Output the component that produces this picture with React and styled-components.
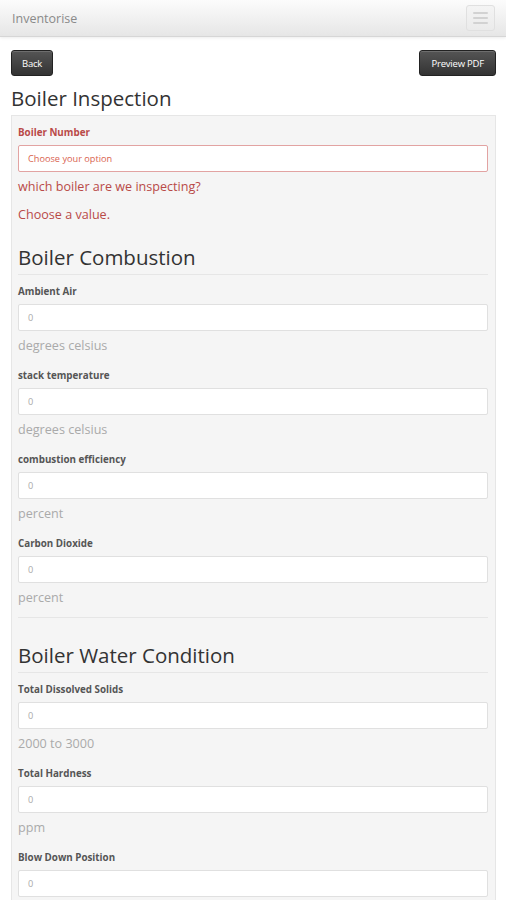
import React from "react";
import styled, { createGlobalStyle } from "styled-components";

const Global = createGlobalStyle`
  html, body { margin: 0; padding: 0; background: #fff; }
  body { font-family: "Open Sans", "Liberation Sans", sans-serif; color: #333; }
  * { box-sizing: border-box; }
`;

const Navbar = styled.div`
  height: 37px;
  display: flex;
  align-items: center;
  justify-content: space-between;
  padding: 0 11px 0 12px;
  background: linear-gradient(#fcfcfc, #e6e6e6);
  border-bottom: 1px solid #d6d6d6;
  box-shadow: 0 1px 3px rgba(0,0,0,0.08);
`;

const Brand = styled.div`
  font-size: 12.5px;
  color: #8a8a8a;
`;

const MenuButton = styled.div`
  width: 29px;
  height: 26px;
  border: 1px solid #e0e0e0;
  border-radius: 3px;
  background: linear-gradient(#f4f4f4, #ebebeb);
  display: flex;
  flex-direction: column;
  align-items: center;
  justify-content: center;
  gap: 3px;
`;

const Bar = styled.span`
  display: block;
  width: 15px;
  height: 2px;
  border-radius: 1px;
  background: #d2d2d2;
`;

const Page = styled.div`
  padding: 13px 10px 0 11px;
`;

const ButtonRow = styled.div`
  display: flex;
  justify-content: space-between;
`;

const DarkButton = styled.div`
  height: 26px;
  padding: 0 ${p => p.$pad || 11}px;
  display: flex;
  align-items: center;
  font-size: 9.5px;
  letter-spacing: -0.2px;
  color: #fff;
  background: linear-gradient(#555, #333);
  border: 1px solid #222;
  border-radius: 3px;
  box-shadow: inset 0 1px 0 rgba(255,255,255,0.15);
`;

const Title = styled.h1`
  margin: 9px 0 4px;
  font-size: 20.5px;
  line-height: 26px;
  font-weight: 400;
  color: #333;
`;

const Well = styled.div`
  background: #f5f5f5;
  border: 1px solid #e6e6e6;
  border-bottom: none;
  padding: 10px 7px 0 6px;
`;

const Field = styled.div`
  display: flex;
  flex-direction: column;
`;

const Label = styled.div`
  font-size: 9.8px;
  font-weight: 700;
  line-height: 14px;
  color: ${p => (p.$error ? "#b94a48" : "#555")};
  margin-bottom: 5px;
`;

const Input = styled.div`
  height: 27px;
  background: #fff;
  border: 1px solid ${p => (p.$error ? "#e2a3a2" : "#e0e0e0")};
  border-radius: 2px;
  display: flex;
  align-items: center;
  padding-left: 9px;
  font-size: 9.2px;
  color: ${p => (p.$error ? "#d9634f" : "#aaa")};
`;

const Help = styled.div`
  font-size: 12.6px;
  line-height: 16px;
  color: ${p => (p.$error ? "#b94a48" : "#aaa")};
  margin-top: ${p => p.$top || 7}px;
`;

const FieldGap = styled.div`
  height: ${p => p.$h}px;
`;

const Section = styled.h2`
  margin: 0 0 10px;
  font-size: 20.5px;
  line-height: 26px;
  font-weight: 400;
  color: #333;
  padding-bottom: 4px;
  border-bottom: 1px solid #e6e6e6;
`;

const Divider = styled.div`
  border-top: 1px solid #e6e6e6;
`;

const fieldsA = [
  { label: "Ambient Air", help: "degrees celsius" },
  { label: "stack temperature", help: "degrees celsius" },
  { label: "combustion efficiency", help: "percent" },
  { label: "Carbon Dioxide", help: "percent" },
];
const fieldsB = [
  { label: "Total Dissolved Solids", help: "2000 to 3000" },
  { label: "Total Hardness", help: "ppm" },
  { label: "Blow Down Position", help: "" },
];

function NumField({ label, help, last }) {
  return (
    <Field>
      <Label>{label}</Label>
      <Input>0</Input>
      {help && <Help>{help}</Help>}
      {!last && <FieldGap $h={15} />}
    </Field>
  );
}

export default function App() {
  return (
    <>
      <Global />
      <Navbar>
        <Brand>Inventorise</Brand>
        <MenuButton>
          <Bar />
          <Bar />
          <Bar />
        </MenuButton>
      </Navbar>
      <Page>
        <ButtonRow>
          <DarkButton $pad={10}>Back</DarkButton>
          <DarkButton $pad={11}>Preview PDF</DarkButton>
        </ButtonRow>
        <Title>Boiler Inspection</Title>
        <Well>
          <Field>
            <Label $error>Boiler Number</Label>
            <Input $error>Choose your option</Input>
            <Help $error $top={7}>which boiler are we inspecting?</Help>
            <Help $error $top={12}>Choose a value.</Help>
          </Field>
          <FieldGap $h={21} />
          <Section>Boiler Combustion</Section>
          {fieldsA.map((f, i) => (
            <NumField key={f.label} {...f} last={i === fieldsA.length - 1} />
          ))}
          <FieldGap $h={11} />
          <Divider />
          <FieldGap $h={24} />
          <Section>Boiler Water Condition</Section>
          {fieldsB.map((f, i) => (
            <NumField key={f.label} {...f} last={i === fieldsB.length - 1} />
          ))}
          <FieldGap $h={40} />
        </Well>
      </Page>
    </>
  );
}
